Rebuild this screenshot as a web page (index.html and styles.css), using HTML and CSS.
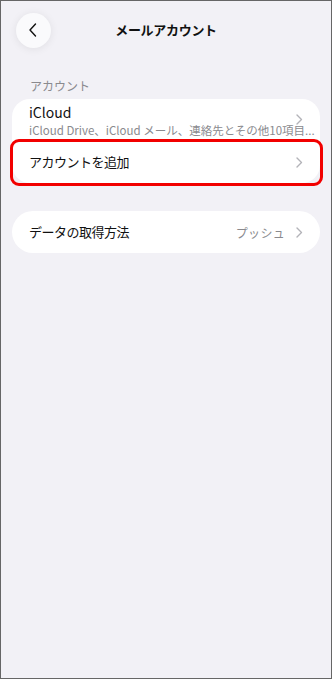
FILE: index.html
```html
<!DOCTYPE html>
<html lang="ja">
<head>
<meta charset="utf-8">
<link rel="stylesheet" href="styles.css">
</head>
<body>
<div class="screen">
  <header class="header">
    <div class="back">
      <svg width="10" height="14" viewBox="0 0 10 14"><path d="M7.5 1 L2 7 L7.5 13" fill="none" stroke="#111" stroke-width="1.4" stroke-linecap="round" stroke-linejoin="round"/></svg>
    </div>
    <h1 class="title">メールアカウント</h1>
    <div></div>
  </header>
  <div class="section-label">アカウント</div>
  <div class="card">
    <div class="row row-two">
      <div class="row-text">
        <div class="row-title">iCloud</div>
        <div class="row-sub">iCloud Drive、iCloud メール、連絡先とその他10項目...</div>
      </div>
      <svg class="chev" width="7" height="11" viewBox="0 0 7 11"><path d="M1 1 L5.5 5.5 L1 10" fill="none" stroke="#b3b3b8" stroke-width="1.4" stroke-linecap="round" stroke-linejoin="round"/></svg>
    </div>
    <div class="row row-hl">
      <div class="row-label">アカウントを追加</div>
      <svg class="chev" width="7" height="11" viewBox="0 0 7 11"><path d="M1 1 L5.5 5.5 L1 10" fill="none" stroke="#b3b3b8" stroke-width="1.4" stroke-linecap="round" stroke-linejoin="round"/></svg>
      <span class="highlight"></span>
    </div>
  </div>
  <div class="card card-2">
    <div class="row">
      <div class="row-label">データの取得方法</div>
      <div class="row-value">プッシュ</div>
      <svg class="chev" width="7" height="11" viewBox="0 0 7 11"><path d="M1 1 L5.5 5.5 L1 10" fill="none" stroke="#b3b3b8" stroke-width="1.4" stroke-linecap="round" stroke-linejoin="round"/></svg>
    </div>
  </div>
</div>
</body>
</html>
```
FILE: styles.css
```css
* { box-sizing: border-box; }
html, body { margin: 0; padding: 0; }
body {
  font-family: "Noto Sans CJK JP", "Noto Sans", sans-serif;
  background: #f2f1f6;
  color: #111;
}
.screen {
  width: 332px;
  height: 679px;
  border: 1px solid #666;
  background: #f2f1f6;
  padding: 0 11px;
  overflow: hidden;
}
.header {
  display: grid;
  grid-template-columns: 1fr auto 1fr;
  align-items: center;
  padding-top: 11px;
  height: 47px;
}
.back {
  width: 35px;
  height: 35px;
  margin-left: 4px;
  border-radius: 50%;
  background: #fafafc;
  box-shadow: 0 1px 8px rgba(0,0,0,0.08);
  display: flex;
  align-items: center;
  justify-content: center;
  padding-right: 2px;
}
.title {
  margin: 0;
  font-size: 13px;
  font-weight: 700;
  line-height: 18px;
  text-align: center;
  letter-spacing: -0.3px;
}
.section-label {
  margin-top: 30px;
  padding-left: 18px;
  font-size: 12px;
  line-height: 16px;
  color: #8a8a8e;
}
.card {
  margin-top: 5px;
  background: #fff;
  border-radius: 18px;
}
.card-2 {
  margin-top: 28px;
  border-radius: 21px;
}
.row {
  position: relative;
  display: flex;
  align-items: center;
  height: 42px;
  padding: 0 17px 0 17px;
}
.row-two {
  padding-top: 4px;
  padding-bottom: 3px;
}
.row-text {
  flex: 1;
  min-width: 0;
  align-self: stretch;
}
.row-title {
  font-size: 14px;
  line-height: 19px;
}
.row-sub {
  font-size: 11.5px;
  line-height: 16px;
  color: #8a8a8e;
  white-space: nowrap;
  margin-right: -14px;
}
.row-two .chev { margin-left: -4px; margin-top: -2px; }
.row-label {
  flex: 1;
  font-size: 13px;
  line-height: 18px;
  letter-spacing: -0.5px;
}
.row-value {
  font-size: 12px;
  color: #8a8a8e;
  margin-right: 11px;
  letter-spacing: 0.3px;
}
.chev { flex: none; }
.highlight {
  position: absolute;
  top: -2px;
  left: -2px;
  right: -3px;
  bottom: -3px;
  border: 3px solid #f20000;
  border-radius: 9px;
  pointer-events: none;
}
```
